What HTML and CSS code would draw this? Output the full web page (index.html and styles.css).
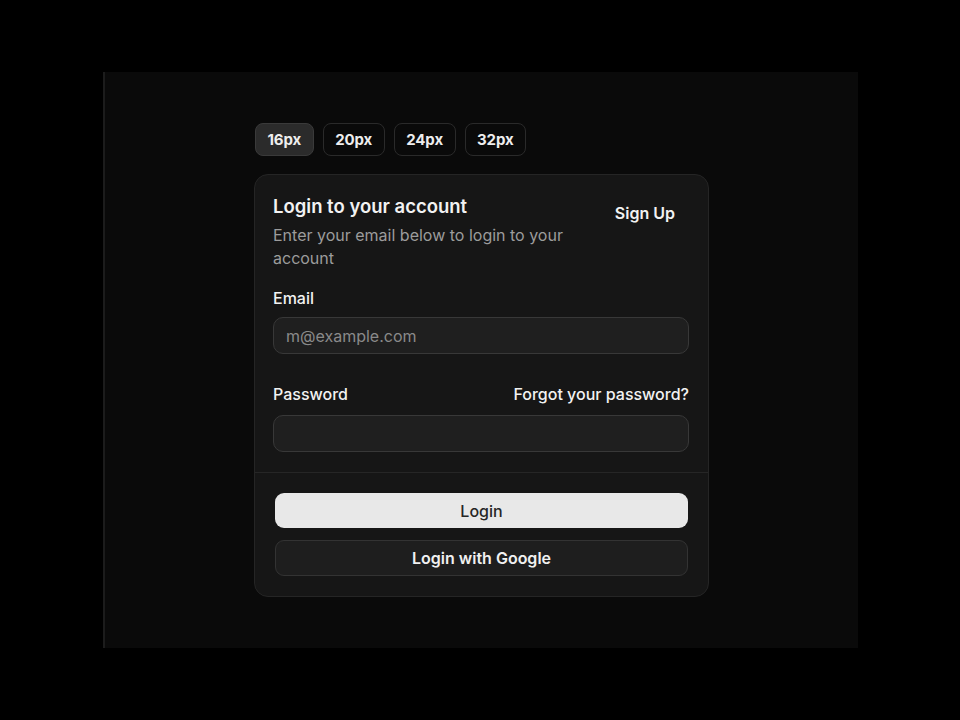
FILE: index.html
```html
<!DOCTYPE html>
<html lang="en">
<head>
    <meta charset="UTF-8">
    <title>Login</title>
    <link rel="stylesheet" href="styles.css">
</head>
<body>
<main class="stage">
    <div class="size-bar">
        <button class="size-button active">16px</button>
        <button class="size-button">20px</button>
        <button class="size-button">24px</button>
        <button class="size-button">32px</button>
    </div>

    <section class="card">
        <div class="card-header">
            <div class="card-titles">
                <h2>Login to your account</h2>
                <p>Enter your email below to login to your account</p>
            </div>
            <a class="ghost-button" href="#">Sign Up</a>
        </div>

        <form class="card-body">
            <div class="field">
                <label for="email">Email</label>
                <input type="email" id="email" placeholder="m@example.com">
            </div>
            <div class="field password-field">
                <div class="field-row">
                    <label for="password">Password</label>
                    <a href="#">Forgot your password?</a>
                </div>
                <input type="password" id="password">
            </div>
        </form>

        <div class="card-footer">
            <button class="primary-button">Login</button>
            <button class="outline-button">Login with Google</button>
        </div>
    </section>
</main>
</body>
</html>
```

FILE: styles.css
```css
body {
    margin: 0;
    padding: 72px 0 0 103px;
    background-color: #000;
    font-family: Inter, "Noto Sans", sans-serif;
    color: #f2f2f2;
}

.stage {
    width: 755px;
    height: 576px;
    background-color: #0a0a0a;
    border-left: 2px solid #1c1c1c;
    padding: 51px 0 0 149px;
    box-sizing: border-box;
}

.size-bar {
    display: flex;
    gap: 9px;
    margin: 0 0 18px 1px;
}

.size-button {
    height: 33px;
    padding: 0 11.5px;
    background-color: transparent;
    color: #eee;
    border: 1px solid #2a2a2a;
    border-radius: 8px;
    font-family: inherit;
    font-size: 15px;
    font-weight: 700;
    letter-spacing: -0.1px;
}

.size-button.active {
    background-color: #2b2b2b;
    border-color: #3a3a3a;
}

.card {
    width: 455px;
    background-color: #161616;
    border: 1px solid #252525;
    border-radius: 14px;
    box-sizing: border-box;
}

a {
    color: inherit;
    text-decoration: none;
}

.card-header {
    display: flex;
    justify-content: space-between;
    align-items: flex-start;
    padding: 19px 19px 0 18px;
}

.card-titles h2 {
    margin: 0;
    font-size: 18.5px;
    font-weight: 600;
    line-height: 24px;
}

.card-titles p {
    margin: 6px 0 0;
    max-width: 310px;
    font-size: 16px;
    line-height: 23px;
    color: #9c9c9c;
}

.ghost-button {
    margin: 1px 14px 0 0;
    height: 36px;
    line-height: 36px;
    font-size: 16px;
    font-weight: 600;
}

.card-body {
    padding: 18px 19px 0 18px;
    display: flex;
    flex-direction: column;
    gap: 30px;
}

.field {
    display: flex;
    flex-direction: column;
    gap: 9px;
}

.password-field {
    gap: 11px;
}

.field-row {
    display: flex;
    justify-content: space-between;
}

.field label,
.field-row a {
    font-size: 16px;
    font-weight: 500;
    line-height: 20px;
}

.field input {
    height: 37px;
    padding: 0 12px;
    background-color: #1f1f1f;
    border: 1px solid #383838;
    border-radius: 10px;
    color: #eee;
    font-family: inherit;
    font-size: 16px;
    box-sizing: border-box;
}

.field input::placeholder {
    color: #8a8a8a;
}

.card-footer {
    margin-top: 20px;
    border-top: 1px solid #262626;
    padding: 20px 20px 20px 20px;
    display: flex;
    flex-direction: column;
    gap: 12px;
}

.primary-button,
.outline-button {
    height: 36px;
    border-radius: 9px;
    font-family: inherit;
    font-size: 16px;
}

.primary-button {
    height: 35px;
    background-color: #e8e8e8;
    color: #262626;
    border: none;
    font-weight: 500;
}

.outline-button {
    background-color: #1e1e1e;
    color: #f0f0f0;
    border: 1px solid #333;
    font-weight: 600;
}
```
